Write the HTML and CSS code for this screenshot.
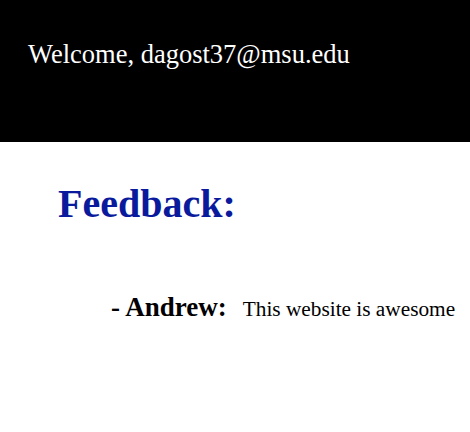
FILE: index.html
```html
<!DOCTYPE html>
<html>
<head>
<meta charset="utf-8">
<link rel="stylesheet" href="styles.css">
</head>
<body>
<header class="topbar">
  <div class="welcome">Welcome, dagost37@msu.edu</div>
</header>
<main class="content">
  <h1 class="title">Feedback:</h1>
  <div class="entry">
    <span class="author">- Andrew:</span>
    <span class="message">This website is awesome</span>
  </div>
</main>
</body>
</html>
```
FILE: styles.css
```css
html, body {
  margin: 0;
  padding: 0;
  background: #ffffff;
  font-family: "Liberation Serif", "Times New Roman", serif;
}
.topbar {
  background: #000000;
  height: 142px;
  padding: 39px 0 0 28px;
  box-sizing: border-box;
}
.welcome {
  color: #ffffff;
  font-size: 26.5px;
  line-height: 30px;
}
.content {
  padding: 39px 0 0 58px;
}
.title {
  margin: 0;
  color: #0a1a9c;
  font-size: 40px;
  line-height: 46px;
  font-weight: bold;
}
.entry {
  display: flex;
  align-items: baseline;
  gap: 16px;
  margin: 65px 0 0 53px;
}
.author {
  font-weight: bold;
  font-size: 27px;
}
.message {
  font-size: 21.3px;
}
```
